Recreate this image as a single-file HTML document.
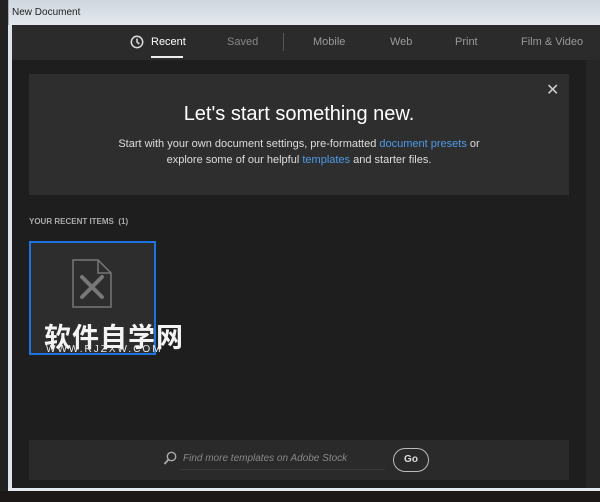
<!DOCTYPE html>
<html><head><style>
*{margin:0;padding:0;box-sizing:border-box}
body{width:600px;height:502px;background:#1a1a1a;position:relative;overflow:hidden;font-family:"Liberation Sans","Noto Sans CJK SC",sans-serif}
.abs{position:absolute}
</style></head><body>
<div class="abs" style="left:0;top:0;width:600px;height:502px;background:#222"></div>
<div class="abs" style="left:8px;top:0;width:592px;height:25px;background:linear-gradient(#cfd6df,#e3e8ee);border-left:1px solid #aab"></div>
<div class="abs" style="left:12px;top:7px;font-size:10px;color:#222">New Document</div>
<div class="abs" style="left:8px;top:25px;width:4px;height:465px;background:#dfe5ec"></div>
<div class="abs" style="left:12px;top:25px;width:588px;height:465px;background:#1e1e1e"></div>
<div class="abs" style="left:12px;top:25px;width:588px;height:35px;background:#2b2b2b"></div>
<svg class="abs" style="left:130px;top:35px" width="14" height="14" viewBox="0 0 14 14"><circle cx="7" cy="7" r="5.7" fill="none" stroke="#ddd" stroke-width="1.5"/><path d="M7 3.5V7l2.3 2" fill="none" stroke="#ddd" stroke-width="1.5"/></svg>
<div class="abs" style="left:151px;top:36px;font-size:11px;color:#fff">Recent</div>
<div class="abs" style="left:151px;top:56px;width:32px;height:2px;background:#eee"></div>
<div class="abs" style="left:227px;top:36px;font-size:11px;color:#888">Saved</div>
<div class="abs" style="left:283px;top:33px;width:1px;height:18px;background:#555"></div>
<div class="abs" style="left:313px;top:36px;font-size:11px;color:#999">Mobile</div>
<div class="abs" style="left:390px;top:36px;font-size:11px;color:#999">Web</div>
<div class="abs" style="left:455px;top:36px;font-size:11px;color:#999">Print</div>
<div class="abs" style="left:521px;top:36px;font-size:11px;color:#999">Film &amp; Video</div>
<div class="abs" style="left:586px;top:60px;width:14px;height:430px;background:#262626"></div>
<div class="abs" style="left:29px;top:74px;width:540px;height:121px;background:#2e2e2e"></div>
<div class="abs" style="left:546px;top:80px;font-size:16px;color:#ccc">✕</div>
<div class="abs" style="left:29px;top:103px;width:540px;text-align:center;font-size:20px;color:#fff">Let's start something new.</div>
<div class="abs" style="left:29px;top:136px;width:540px;text-align:center;font-size:11px;line-height:16px;color:#ddd">Start with your own document settings, pre-formatted <span style="color:#4d9ae8">document presets</span> or<br>explore some of our helpful <span style="color:#4d9ae8">templates</span> and starter files.</div>
<div class="abs" style="left:29px;top:217px;font-size:8px;font-weight:bold;color:#aaa">YOUR RECENT ITEMS&nbsp;&nbsp;(1)</div>
<div class="abs" style="left:29px;top:241px;width:127px;height:114px;background:#2d2d2d;border:2px solid #1d74e0"></div>
<svg class="abs" style="left:72px;top:259px" width="40" height="49" viewBox="0 0 40 49"><path d="M1 1H26L39 14V48H1Z M26 1V14H39" fill="none" stroke="#777" stroke-width="1.5"/><path d="M10 18L30 38M30 18L10 38" stroke="#777" stroke-width="4" stroke-linecap="round"/></svg>
<div class="abs" style="left:44px;top:316px;font-size:27px;font-weight:bold;color:#f4f4f4;letter-spacing:1px">软件自学网</div>
<div class="abs" style="left:46px;top:344px;font-size:10px;color:#eee;letter-spacing:2px">WWW.RJZXW.COM</div>
<div class="abs" style="left:29px;top:440px;width:540px;height:40px;background:#2a2a2a"></div>
<svg class="abs" style="left:163px;top:451px" width="14" height="15" viewBox="0 0 14 15"><circle cx="8.5" cy="5.5" r="4.2" fill="none" stroke="#aaa" stroke-width="1.4"/><path d="M5.5 8.5L1.5 13" stroke="#aaa" stroke-width="1.8"/></svg>
<div class="abs" style="left:183px;top:453px;font-size:10px;font-style:italic;color:#888">Find more templates on Adobe Stock</div>
<div class="abs" style="left:180px;top:469px;width:205px;height:1px;background:#3a3a3a"></div>
<div class="abs" style="left:393px;top:448px;width:36px;height:24px;border:1.5px solid #bbb;border-radius:12px;color:#ddd;font-size:10px;font-weight:bold;text-align:center;line-height:21px">Go</div>
<div class="abs" style="left:8px;top:488px;width:592px;height:3px;background:#e4e9ef"></div>
<div class="abs" style="left:0;top:491px;width:600px;height:11px;background:#1c1818"></div>
</body></html>
